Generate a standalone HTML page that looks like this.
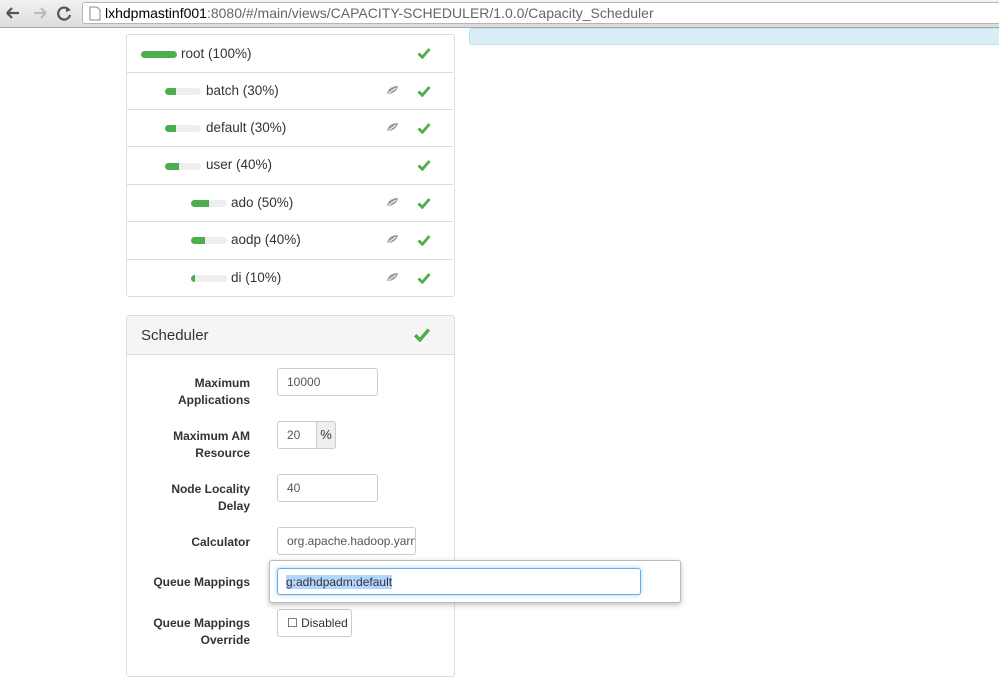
<!DOCTYPE html><html><head><style>
*{box-sizing:border-box}
body{margin:0;width:999px;height:687px;overflow:hidden;background:#fff;font-family:"Liberation Sans",sans-serif;position:relative;color:#333}
.a{position:absolute}
.bar{left:0;top:0;width:999px;height:28px;background:linear-gradient(#f2f2f2,#dcdcdc);border-bottom:1px solid #a8a8a8}
.url{left:82px;top:2px;width:930px;height:22px;background:#fff;border:1px solid #b5b5b5;border-radius:3px;font-size:14px;line-height:20px}
.panel{border:1px solid #ddd;border-radius:3px;background:#fff}
.row{position:absolute;left:0;width:326px;height:38px;border-bottom:1px solid #ddd;font-size:13.5px}
.row span.t{position:absolute;top:11px}
.pb{position:absolute;top:16px;width:36px;height:7px;border-radius:4px;background:#eee;overflow:hidden}
.pb i{display:block;height:100%;background:#4cae4c}
.chk{position:absolute;left:290px;top:12px}
.leaf{position:absolute;left:259px;top:12px}
.lbl{position:absolute;width:130px;text-align:right;font-size:12px;font-weight:bold;line-height:17px;color:#333}
.inp{position:absolute;border:1px solid #ccc;border-radius:3px;height:28px;font-size:12px;line-height:26px;padding-left:9px;background:#fff;color:#555}
</style></head><body>
<div class="a bar"></div>
<svg class="a" style="left:4px;top:5px" width="70" height="16"><path d="M3 8h12M3 8l5-5M3 8l5 5" stroke="#555" stroke-width="2.2" fill="none"/><path d="M30 8h12M42 8l-5-5M42 8l-5 5" stroke="#bbb" stroke-width="2.2" fill="none"/><path d="M65 5a6 6 0 1 0 1 5" stroke="#555" stroke-width="2.2" fill="none"/><path d="M62 2l5 3-5 2z" fill="#555"/></svg>
<div class="a url"><svg class="a" style="left:6px;top:3px" width="12" height="15"><path d="M1 1h7l3 3v10H1z" fill="#fff" stroke="#888"/></svg><span class="a" style="left:22px;top:0;color:#000">lxhdpmastinf001<span style="color:#666">:8080/#/main/views/CAPACITY-SCHEDULER/1.0.0/Capacity_Scheduler</span></span></div>
<div class="a" style="left:469px;top:28px;width:540px;height:17px;background:#dbeef8;border:1px solid #bfe0ee;border-radius:3px"></div>

<svg width="0" height="0" style="position:absolute"><defs>
<symbol id="c" viewBox="0 0 14 12"><path d="M1.5 6.5l3.8 3.8L12.5 2" stroke="#4cae4c" stroke-width="2.8" fill="none"/></symbol>
<symbol id="l" viewBox="0 0 13 10"><path d="M1 9C2 3 7 1 12 1 11 6 7 9 1 9z" fill="#999"/><path d="M2 8.5L10 3" stroke="#fff" stroke-width="1"/></symbol>
</defs></svg>

<div class="a panel" style="left:126px;top:34px;width:329px;height:263px">
<div class="row" style="top:0"><div class="pb" style="left:14px"><i style="width:100%"></i></div><span class="t" style="left:54px">root (100%)</span><svg class="chk" width="14" height="12"><use href="#c"/></svg></div>
<div class="row" style="top:38px;height:37px"><div class="pb" style="left:38px;top:15px"><i style="width:30%"></i></div><span class="t" style="left:79px;top:10px">batch (30%)</span><svg class="leaf" width="13" height="10"><use href="#l"/></svg><svg class="chk" width="14" height="12"><use href="#c"/></svg></div>
<div class="row" style="top:75px;height:37px"><div class="pb" style="left:38px;top:15px"><i style="width:30%"></i></div><span class="t" style="left:79px;top:10px">default (30%)</span><svg class="leaf" width="13" height="10"><use href="#l"/></svg><svg class="chk" width="14" height="12"><use href="#c"/></svg></div>
<div class="row" style="top:112px;height:38px"><div class="pb" style="left:38px"><i style="width:40%"></i></div><span class="t" style="left:79px;top:10px">user (40%)</span><svg class="chk" width="14" height="12"><use href="#c"/></svg></div>
<div class="row" style="top:150px;height:37px"><div class="pb" style="left:64px;top:15px"><i style="width:50%"></i></div><span class="t" style="left:104px;top:10px">ado (50%)</span><svg class="leaf" width="13" height="10"><use href="#l"/></svg><svg class="chk" width="14" height="12"><use href="#c"/></svg></div>
<div class="row" style="top:187px;height:38px"><div class="pb" style="left:64px;top:15px"><i style="width:40%"></i></div><span class="t" style="left:104px;top:10px">aodp (40%)</span><svg class="leaf" width="13" height="10"><use href="#l"/></svg><svg class="chk" width="14" height="12"><use href="#c"/></svg></div>
<div class="row" style="top:225px;height:36px;border-bottom:none"><div class="pb" style="left:64px;top:15px"><i style="width:10%"></i></div><span class="t" style="left:104px;top:10px">di (10%)</span><svg class="leaf" width="13" height="10"><use href="#l"/></svg><svg class="chk" width="14" height="12"><use href="#c"/></svg></div>
</div>

<div class="a panel" style="left:126px;top:315px;width:329px;height:362px;overflow:visible">
<div class="a" style="left:0;top:0;width:327px;height:39px;background:#f5f5f5;border-bottom:1px solid #ddd;border-radius:3px 3px 0 0"><span class="a" style="left:14px;top:11px;font-size:15px">Scheduler</span><svg class="a" style="left:286px;top:11px" width="18" height="15"><use href="#c"/></svg></div>
<div class="lbl" style="left:-7px;top:59px">Maximum<br>Applications</div>
<div class="inp" style="left:150px;top:52px;width:101px">10000</div>
<div class="lbl" style="left:-7px;top:112px">Maximum AM<br>Resource</div>
<div class="inp" style="left:150px;top:105px;width:40px;border-radius:3px 0 0 3px">20</div>
<div class="a" style="left:189px;top:105px;width:20px;height:28px;border:1px solid #ccc;background:#eee;border-radius:0 3px 3px 0;font-size:13px;text-align:center;line-height:26px">%</div>
<div class="lbl" style="left:-7px;top:165px">Node Locality<br>Delay</div>
<div class="inp" style="left:150px;top:158px;width:101px">40</div>
<div class="lbl" style="left:-7px;top:218px">Calculator</div>
<div class="inp" style="left:150px;top:211px;width:139px;overflow:hidden;white-space:nowrap">org.apache.hadoop.yarn</div>
<div class="lbl" style="left:-7px;top:258px">Queue Mappings</div>
<div class="lbl" style="left:-7px;top:299px">Queue Mappings<br>Override</div>
<div class="inp" style="left:150px;top:293px;width:75px;color:#333">☐ Disabled</div>
</div>
<div class="a" style="left:269px;top:560px;width:412px;height:43px;background:#fff;border:1px solid #bbb;border-radius:3px;box-shadow:0 2px 6px rgba(0,0,0,.25)"></div>
<div class="inp" style="left:277px;top:568px;width:364px;height:27px;border-color:#66afe9;box-shadow:0 0 4px rgba(102,175,233,.6);color:#333;padding-left:8px"><span style="background:#b4d5fe">g:adhdpadm:default</span></div>
</body></html>
